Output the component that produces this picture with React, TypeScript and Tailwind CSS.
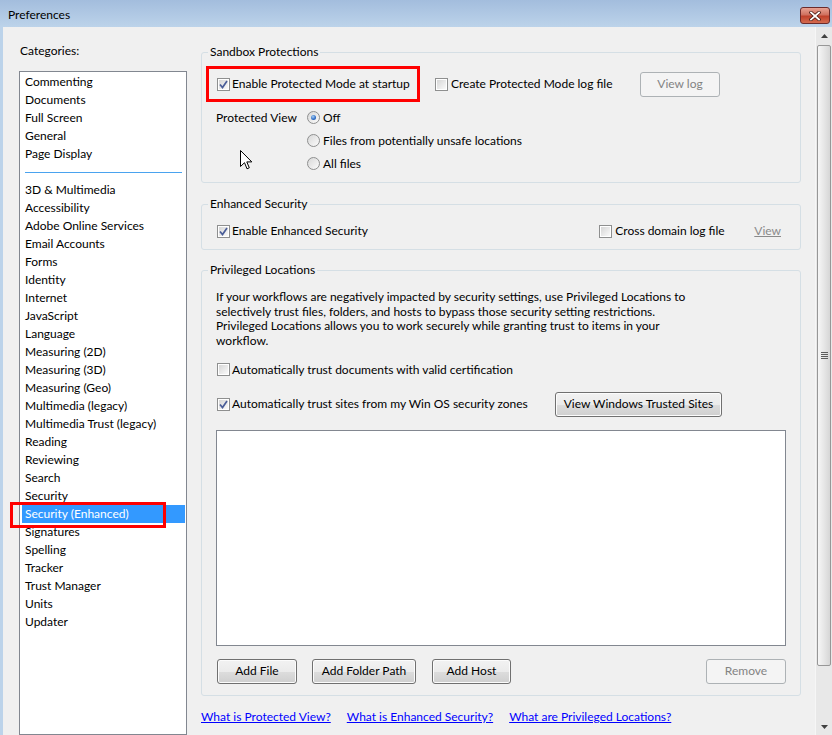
import type { ReactNode } from 'react';

const topCategories = ['Commenting', 'Documents', 'Full Screen', 'General', 'Page Display'];

const categories = [
  '3D & Multimedia',
  'Accessibility',
  'Adobe Online Services',
  'Email Accounts',
  'Forms',
  'Identity',
  'Internet',
  'JavaScript',
  'Language',
  'Measuring (2D)',
  'Measuring (3D)',
  'Measuring (Geo)',
  'Multimedia (legacy)',
  'Multimedia Trust (legacy)',
  'Reading',
  'Reviewing',
  'Search',
  'Security',
  'Security (Enhanced)',
  'Signatures',
  'Spelling',
  'Tracker',
  'Trust Manager',
  'Units',
  'Updater',
];

const SELECTED = 'Security (Enhanced)';

// Windows 7 style checkbox
const Checkbox = ({ checked = false }: { checked?: boolean }) => (
  <div className="w-[13px] h-[13px] shrink-0 border border-[#8e8f8f] bg-white p-px">
    <div className="relative w-full h-full bg-gradient-to-br from-[#d6d6d6] to-[#fafafa]">
      {checked && (
        <svg viewBox="0 0 9 9" className="absolute inset-0 w-[9px] h-[9px]">
          <path d="M1 4.5 L3.5 7.5 L8 1" fill="none" stroke="#4a5d98" strokeWidth="1.7" />
        </svg>
      )}
    </div>
  </div>
);

const Radio = ({ checked = false }: { checked?: boolean }) => (
  <div className="w-[13px] h-[13px] shrink-0 rounded-full border border-[#8e8f8f] bg-gradient-to-br from-[#d8d8d8] to-[#fbfbfb] flex items-center justify-center">
    {checked && (
      <div className="w-[5px] h-[5px] rounded-full bg-[radial-gradient(circle_at_40%_35%,#a7d0f5_0%,#2d6bc4_60%,#1c4a94_100%)]" />
    )}
  </div>
);

const Button = ({ children, width, disabled = false }: { children: ReactNode; width: string; disabled?: boolean }) => (
  <div
    className={`${width} h-[25px] shrink-0 rounded-[3px] border flex items-center justify-center ${
      disabled
        ? 'border-[#adb2b5] bg-[#f4f4f4] text-[#838383]'
        : 'border-[#707070] bg-[linear-gradient(to_bottom,#f2f2f2_0%,#ebebeb_50%,#dddddd_50%,#cfcfcf_100%)] shadow-[inset_0_0_0_1px_#fcfcfc] text-black'
    }`}
  >
    {children}
  </div>
);

const GroupBox = ({ title, children, className = '' }: { title: string; children: ReactNode; className?: string }) => (
  <fieldset className={`rounded-[3px] border border-[#d5dfe5] ${className}`}>
    <legend className="ml-[6px] px-[2px] h-[16px] leading-[16px]">{title}</legend>
    {children}
  </fieldset>
);

const Cursor = () => (
  <svg width="13" height="21" viewBox="0 0 13 21" className="mt-[21px] ml-[24px]">
    <path
      d="M0.5 0.5 L0.5 16.5 L4.5 12.7 L7 18.8 L9.3 17.8 L6.8 11.9 L11.8 11.9 Z"
      fill="white"
      stroke="black"
      strokeWidth="1"
      strokeLinejoin="round"
    />
  </svg>
);

const App = () => {
  return (
    <div className="w-[832px] h-[735px] overflow-hidden flex flex-col font-['Lato','Liberation_Sans',sans-serif] text-[12px] text-black">
      {/* Title bar */}
      <div className="h-[27px] shrink-0 flex items-start bg-gradient-to-b from-[#a3bddd] to-[#bcd3ea]">
        <span className="mt-[7px] leading-[16px] pl-[8px] flex-1">Preferences</span>
        <div className="mt-[7px] w-[30px] h-[17px] mr-[2px] rounded-[3px] border border-[#6b2b2b] bg-[linear-gradient(to_bottom,#e8a293_0%,#d0715f_45%,#c0412b_55%,#d46b4f_100%)] flex items-center justify-center">
          <svg width="12" height="10" viewBox="0 0 12 10">
            <path d="M2 1.5 L10 8.5 M10 1.5 L2 8.5" stroke="#4a1a12" strokeWidth="3.4" strokeLinecap="square" />
            <path d="M2 1.5 L10 8.5 M10 1.5 L2 8.5" stroke="white" strokeWidth="1.8" strokeLinecap="square" />
          </svg>
        </div>
      </div>

      <div className="flex-1 flex min-h-0">
        {/* window frame */}
        <div className="w-[3px] shrink-0 bg-[#bcd3ea]" />

        {/* dialog body */}
        <div className="flex-1 flex bg-[#f0f0f0] pl-[16px] pt-[16px] min-w-0">
          {/* Categories */}
          <div className="w-[168px] shrink-0 flex flex-col">
            <div className="h-[16px] leading-[16px] pl-px">Categories:</div>
            <div className="mt-[12px] flex-1 border border-[#828790] bg-white pt-px">
              {topCategories.map((c) => (
                <div key={c} className="h-[18px] mx-[2px] px-[3px] flex items-center">
                  {c}
                </div>
              ))}
              <div className="h-[18px] flex items-center">
                <div className="ml-[5px] mr-[4px] flex-1 h-px bg-[#4aa3ef]" />
              </div>
              {categories.map((c) =>
                c === SELECTED ? (
                  <div key={c} className="relative h-[18px] ml-[2px] mr-px px-[3px] flex items-center bg-[#3399ff] text-white">
                    {c}
                    <div className="absolute left-[-12px] top-[-3px] w-[156px] h-[26px] border-[3px] border-[#ff0000]" />
                  </div>
                ) : (
                  <div key={c} className="h-[18px] mx-[2px] px-[3px] flex items-center">
                    {c}
                  </div>
                )
              )}
            </div>
          </div>

          {/* Settings panel */}
          <div className="ml-[14px] w-[600px] shrink-0 pt-px">
            <GroupBox title="Sandbox Protections">
              <div className="px-[14px] pt-[6px] pb-[7px]">
                <div className="flex items-center h-[36px]">
                  <div className="-ml-[10px] w-[214px] h-[36px] border-[3px] border-[#ff0000] flex items-center pl-[8px]">
                    <Checkbox checked />
                    <span className="ml-[2px]">Enable Protected Mode at startup</span>
                  </div>
                  <div className="ml-[15px] w-[205px] flex items-center">
                    <Checkbox />
                    <span className="ml-[3px]">Create Protected Mode log file</span>
                  </div>
                  <Button width="w-[80px]" disabled>
                    View log
                  </Button>
                </div>
                <div className="mt-[4px] flex">
                  <div className="w-[91px] flex flex-col">
                    <div className="h-[23px] flex items-center">Protected View</div>
                    <Cursor />
                  </div>
                  <div className="flex flex-col">
                    <div className="h-[23px] flex items-center">
                      <Radio checked />
                      <span className="ml-[3px]">Off</span>
                    </div>
                    <div className="h-[23px] flex items-center">
                      <Radio />
                      <span className="ml-[3px]">Files from potentially unsafe locations</span>
                    </div>
                    <div className="h-[23px] flex items-center">
                      <Radio />
                      <span className="ml-[3px]">All files</span>
                    </div>
                  </div>
                </div>
              </div>
            </GroupBox>

            <GroupBox title="Enhanced Security" className="mt-[13px]">
              <div className="pl-[15px] pr-[19px] pt-[10px] pb-[9px] flex items-center h-[37px]">
                <div className="flex-1 flex items-center">
                  <Checkbox checked />
                  <span className="ml-[2px]">Enable Enhanced Security</span>
                </div>
                <div className="w-[155px] flex items-center">
                  <Checkbox />
                  <span className="ml-[3px]">Cross domain log file</span>
                </div>
                <span className="text-[#8a8a8a] underline">View</span>
              </div>
            </GroupBox>

            <GroupBox title="Privileged Locations" className="mt-[12px]">
              <div className="px-[14px] pt-[12px] pb-[11px]">
                <p className="leading-[14.7px]">
                  If your workflows are negatively impacted by security settings, use Privileged Locations to
                  <br />
                  selectively trust files, folders, and hosts to bypass those security setting restrictions.
                  <br />
                  Privileged Locations allows you to work securely while granting trust to items in your
                  <br />
                  workflow.
                </p>
                <div className="mt-[12px] h-[18px] flex items-center pl-px">
                  <Checkbox />
                  <span className="ml-[2px]">Automatically trust documents with valid certification</span>
                </div>
                <div className="mt-[13px] h-[25px] flex items-center">
                  <div className="w-[339px] flex items-center pl-px">
                    <Checkbox checked />
                    <span className="ml-[2px]">Automatically trust sites from my Win OS security zones</span>
                  </div>
                  <Button width="w-[167px]">View Windows Trusted Sites</Button>
                </div>
                <div className="mt-[13px] h-[216px] border border-[#828790] bg-white" />
                <div className="mt-[13px] flex items-center">
                  <div className="ml-px">
                    <Button width="w-[80px]">Add File</Button>
                  </div>
                  <div className="ml-[15px]">
                    <Button width="w-[104px]">Add Folder Path</Button>
                  </div>
                  <div className="ml-[16px]">
                    <Button width="w-[79px]">Add Host</Button>
                  </div>
                  <div className="ml-auto">
                    <Button width="w-[80px]" disabled>
                      Remove
                    </Button>
                  </div>
                </div>
              </div>
            </GroupBox>

            <div className="mt-[13px] h-[16px] flex items-center gap-[16px] text-[#0000ff] underline">
              <span>What is Protected View?</span>
              <span>What is Enhanced Security?</span>
              <span>What are Privileged Locations?</span>
            </div>
          </div>
        </div>

        {/* vertical scrollbar */}
        <div className="w-[17px] shrink-0 flex flex-col bg-[#e8e8e8] border-l border-[#f6f6f6]">
          <div className="h-[17px] flex items-center justify-center">
            <svg width="7" height="4" viewBox="0 0 7 4">
              <path d="M0 4 L3.5 0 L7 4 Z" fill="#404040" />
            </svg>
          </div>
          <div className="flex-1 flex flex-col">
            <div className="mt-px ml-px w-[14px] h-[621px] rounded-[2px] border border-[#979797] bg-[linear-gradient(to_right,#f6f6f6_0%,#e8e8e8_45%,#d6d6d6_100%)] flex items-center justify-center">
              <div className="flex flex-col gap-[1px]">
                <div className="w-[7px] h-px bg-[#5c5c5c]" />
                <div className="w-[7px] h-px bg-[#5c5c5c]" />
                <div className="w-[7px] h-px bg-[#5c5c5c]" />
                <div className="w-[7px] h-px bg-[#5c5c5c]" />
              </div>
            </div>
          </div>
          <div className="h-[17px] flex items-center justify-center">
            <svg width="7" height="4" viewBox="0 0 7 4">
              <path d="M0 0 L3.5 4 L7 0 Z" fill="#404040" />
            </svg>
          </div>
        </div>
      </div>
    </div>
  );
};

export default App;
